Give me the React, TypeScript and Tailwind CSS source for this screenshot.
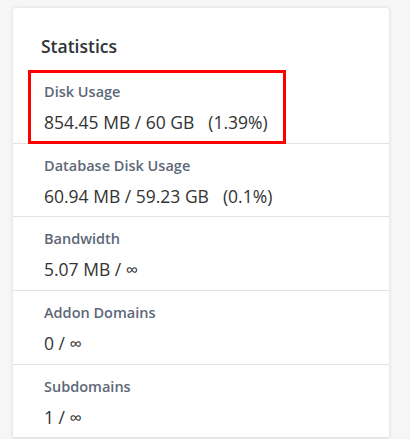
import React from "react";

interface Stat {
  label: string;
  value: string;
  pct?: string;
  highlight?: boolean;
}

const stats: Stat[] = [
  { label: "Disk Usage", value: "854.45 MB / 60 GB", pct: "(1.39%)", highlight: true },
  { label: "Database Disk Usage", value: "60.94 MB / 59.23 GB", pct: "(0.1%)" },
  { label: "Bandwidth", value: "5.07 MB / ∞" },
  { label: "Addon Domains", value: "0 / ∞" },
  { label: "Subdomains", value: "1 / ∞" },
];

export default function App() {
  return (
    <main
      className="min-h-screen w-[410px] h-[439px] overflow-hidden bg-[#f6f6f6] pt-[8px] pl-[13px]"
      style={{ fontFamily: '"Open Sans", "Noto Sans", sans-serif' }}
    >
      <div className="w-[376px] bg-white rounded-t-[3px] shadow-[0_0_4px_rgba(0,0,0,0.12)]">
        <div className="h-[62px] pt-[26px] pl-[28px]">
          <h2 className="text-[17.5px] leading-[24px] font-semibold text-[#2f3337]">Statistics</h2>
        </div>
        {stats.map((s) => (
          <div key={s.label} className="relative h-[73.7px] border-b border-[#e2e2e2] pl-[31px] pt-[12px]">
            <div className="text-[14.5px] leading-[20px] font-semibold text-[#5d6878]">{s.label}</div>
            <div className="mt-[8px] text-[17.5px] leading-[24px] text-[#333]">
              {s.value}
              {s.pct && <span className="ml-[14px]">{s.pct}</span>}
            </div>
            {s.highlight && (
              <div className="absolute left-[15px] top-0 w-[258px] h-[74px] border-[3px] border-[#ff0000]" />
            )}
          </div>
        ))}
      </div>
    </main>
  );
}
